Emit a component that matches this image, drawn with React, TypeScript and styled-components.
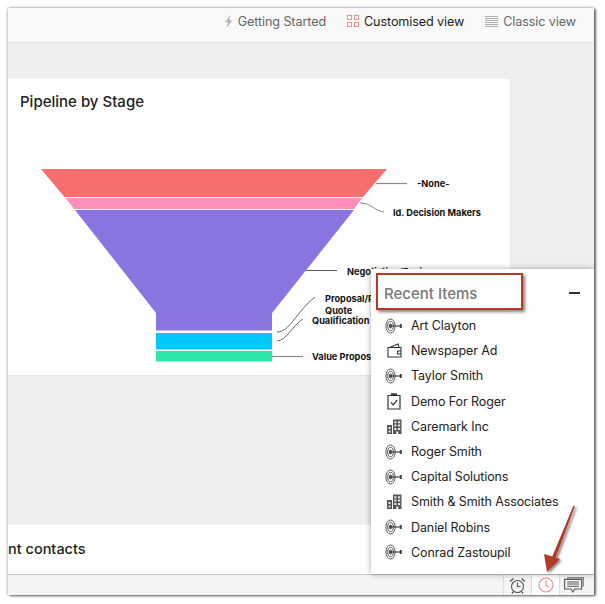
import type { ReactNode } from "react";

import styled, { createGlobalStyle } from "styled-components";

const GlobalStyle = createGlobalStyle`
  html, body {
    margin: 0;
    padding: 0;
    background: #fff;
    font-family: Inter, "Open Sans", sans-serif;
  }
`;

const Page = styled.div`
  width: 605px;
  height: 604px;
  padding: 8px 11px 9px 8px;
  box-sizing: border-box;
  overflow: hidden;
`;

const Window = styled.div`
  position: relative;
  width: 586px;
  height: 587px;
  display: flex;
  flex-direction: column;
  background: #efefef;
  box-shadow: 0 0 3px rgba(0, 0, 0, 0.45), 2px 1px 2px rgba(0, 0, 0, 0.5);
  overflow: hidden;
`;

const Header = styled.header`
  flex: none;
  height: 26px;
  padding: 0 18px 8px 0;
  display: flex;
  align-items: center;
  justify-content: flex-end;
  gap: 21px;
  background: #f9f9f9;
  border-bottom: 1px solid #e4e4e4;
`;

const ViewLink = styled.div<{ $active?: boolean }>`
  display: flex;
  align-items: center;
  gap: 5px;
  font-size: 12.6px;
  letter-spacing: -0.1px;
  color: ${(p) => (p.$active ? "#1c1c1c" : "#666")};
`;

const Main = styled.main`
  flex: 1;
  display: flex;
  flex-direction: column;
  justify-content: space-between;
  padding-top: 36px;
  min-height: 0;
`;

const ChartCard = styled.section`
  width: 502px;
  height: 297px;
  background: #fff;
  border-bottom: 1px solid #e3e3e3;
  box-sizing: border-box;
`;

const CardTitle = styled.h2`
  margin: 0;
  height: 41px;
  padding: 14px 0 0 12px;
  box-sizing: border-box;
  font-size: 15px;
  line-height: 18px;
  font-weight: 500;
  color: #222;
`;

const ContactsCard = styled.section`
  height: 49px;
  display: flex;
  align-items: center;
  background: #fff;
`;

const ContactsTitle = styled.h2`
  margin: 0 0 2px 0;
  font-size: 14.5px;
  font-weight: 500;
  color: #222;
  white-space: nowrap;
`;

const Footer = styled.footer`
  flex: none;
  height: 20px;
  display: flex;
  justify-content: flex-end;
  padding-right: 7px;
  background: #f4f4f4;
  border-top: 1px solid #c9c9c9;
`;

const FooterButton = styled.div<{ $active?: boolean }>`
  width: 27px;
  display: flex;
  align-items: center;
  justify-content: center;
  border-left: 1px solid #dedede;
  background: ${(p) => (p.$active ? "#fff" : "transparent")};
`;

const Popup = styled.aside`
  position: absolute;
  right: 0;
  bottom: 21px;
  width: 223px;
  height: 305px;
  background: #fff;
  box-shadow: 0 0 6px rgba(0, 0, 0, 0.35);
`;

const PopupHeader = styled.div`
  height: 44px;
  padding: 4px 14px 0 13px;
  box-sizing: border-box;
  display: flex;
  align-items: center;
  justify-content: space-between;
`;

const PopupTitle = styled.h3`
  margin: 0;
  font-size: 15px;
  font-weight: 500;
  color: #777;
`;

const Collapse = styled.span`
  width: 11px;
  height: 2px;
  background: #333;
`;

const Highlight = styled.div`
  position: absolute;
  left: 5px;
  top: 4px;
  width: 147px;
  height: 37px;
  box-sizing: border-box;
  border: 2px solid #b23a28;
  box-shadow: 2px 2px 3px rgba(0, 0, 0, 0.5);
`;

const ItemList = styled.ul`
  margin: 0;
  padding: 0;
  list-style: none;
`;

const Item = styled.li`
  height: 25.2px;
  display: flex;
  align-items: center;
  gap: 8px;
  padding-left: 14px;
  font-size: 12.5px;
  letter-spacing: -0.1px;
  color: #222;
`;

const ItemIcon = styled.span`
  width: 18px;
  height: 18px;
  flex: none;
  display: flex;
  align-items: center;
  justify-content: center;
`;

const Arrow = styled.svg`
  position: absolute;
  left: 530px;
  top: 490px;
  overflow: visible;
`;

const chartText = {
  fontSize: 9.2,
  fontWeight: 700,
  fill: "#111",
};

type IconKind = "contact" | "campaign" | "task" | "account";

const items: { label: string; icon: IconKind }[] = [
  { label: "Art Clayton", icon: "contact" },
  { label: "Newspaper Ad", icon: "campaign" },
  { label: "Taylor Smith", icon: "contact" },
  { label: "Demo For Roger", icon: "task" },
  { label: "Caremark Inc", icon: "account" },
  { label: "Roger Smith", icon: "contact" },
  { label: "Capital Solutions", icon: "contact" },
  { label: "Smith & Smith Associates", icon: "account" },
  { label: "Daniel Robins", icon: "contact" },
  { label: "Conrad Zastoupil", icon: "contact" },
];

function BoltIcon(): ReactNode {
  return (
    <svg width="9" height="13" viewBox="0 0 9 13">
      <path d="M6.5 0 L1 7.2 H4 L2.4 13 L8.5 5.6 H5.3 Z" fill="#b5b5b5" />
    </svg>
  );
}

function GridIcon(): ReactNode {
  return (
    <svg width="12" height="12" viewBox="0 0 12 12" fill="none" stroke="#f58e8a">
      <rect x="0.5" y="0.5" width="4" height="4" />
      <rect x="7.5" y="0.5" width="4" height="4" />
      <rect x="0.5" y="7.5" width="4" height="4" />
      <rect x="7.5" y="7.5" width="4" height="4" />
    </svg>
  );
}

function LinesIcon(): ReactNode {
  return (
    <svg width="13" height="11" viewBox="0 0 13 11" stroke="#b0b0b0">
      <path d="M0 0.5H13M0 2.5H13M0 4.5H13M0 6.5H13M0 8.5H13M0 10.5H13" />
    </svg>
  );
}

function ItemGlyph({ kind }: { kind: IconKind }): ReactNode {
  if (kind === "contact") {
    return (
      <svg width="18" height="16" viewBox="0 0 18 16" fill="none" stroke="#444" strokeWidth="0.9">
        <ellipse cx="5.5" cy="8" rx="4.6" ry="7" />
        <ellipse cx="5.5" cy="8" rx="2.8" ry="4.6" />
        <ellipse cx="5.5" cy="8" rx="1.1" ry="2" fill="#444" />
        <path d="M7 8H15" strokeWidth="1.2" />
        <path d="M15.8 6V10" strokeWidth="2" />
      </svg>
    );
  }
  if (kind === "campaign") {
    return (
      <svg width="15" height="15" viewBox="0 0 15 15" fill="none" stroke="#333" strokeWidth="1.1">
        <path d="M1 4.5H14V14H1Z" />
        <path d="M2.5 4.5L11 1L12 4.5" />
        <path d="M14 8H10.5V11H14" />
      </svg>
    );
  }
  if (kind === "task") {
    return (
      <svg width="14" height="17" viewBox="0 0 14 17" fill="none" stroke="#333" strokeWidth="1.2">
        <path d="M1 2.5H13V16H1Z" />
        <path d="M4 1.5H10" strokeWidth="2.4" />
        <path d="M4 9.5L6.3 11.8L10.2 7" />
      </svg>
    );
  }
  return (
    <svg width="15" height="15" viewBox="0 0 15 15" fill="#555">
      <path d="M0 6H5V15H0Z" />
      <path d="M6 0.5H14.5V15H6Z" />
      <path
        fill="#e8e8e8"
        d="M7.3 2.3H9.5V4.3H7.3ZM11 2.3H13.2V4.3H11ZM7.3 5.6H9.5V7.6H7.3ZM11 5.6H13.2V7.6H11ZM7.3 9H9.5V11H7.3ZM11 9H13.2V11H11ZM1.5 8H3.5V10H1.5ZM1.5 11.5H3.5V13.5H1.5Z"
      />
      <path fill="#fff" d="M9.3 12.5H11.2V15H9.3Z" />
    </svg>
  );
}

function FunnelChart(): ReactNode {
  return (
    <svg width="502" height="255" viewBox="8 120 502 255" style={{ display: "block" }}>
      <polygon points="41,169 387,169 363,197 64.5,197" fill="#f66f6d" />
      <polygon points="65.5,198 362,198 354,209 74,209" fill="#fe8fba" />
      <polygon points="75,210 354,210 272,313 272,330.5 156,330.5 156,313" fill="#8a75e0" />
      <rect x="156" y="333" width="116" height="16.5" fill="#00c8fa" />
      <rect x="156" y="351" width="116" height="10.5" fill="#2ce6ae" />
      <g fill="none" stroke="#8a8a8a">
        <path d="M376 183.5H407" strokeWidth="1.2" />
        <path d="M360 203C372 203 374 211 384 212" />
        <path d="M306 270.5H337" stroke="#555" />
        <path d="M277 332C290 332 296 312 315 297" stroke="#666" />
        <path d="M277 341C286 341 292 326 303 319" stroke="#666" />
        <path d="M272 356.5H303" strokeWidth="1.2" />
      </g>
      <text x="417" y="187" {...chartText}>-None-</text>
      <text x="393" y="216" {...chartText}>Id. Decision Makers</text>
      <text x="347" y="275" {...chartText}>Negotiation/Review</text>
      <text x="325" y="302" {...chartText}>Proposal/Price</text>
      <text x="325" y="314" {...chartText}>Quote</text>
      <text x="312" y="324" {...chartText}>Qualification</text>
      <text x="312" y="360" {...chartText}>Value Proposition</text>
    </svg>
  );
}

export default function App(): ReactNode {
  return (
    <Page>
      <GlobalStyle />
      <Window>
        <Header>
          <ViewLink>
            <BoltIcon />
            Getting Started
          </ViewLink>
          <ViewLink $active>
            <GridIcon />
            Customised view
          </ViewLink>
          <ViewLink>
            <LinesIcon />
            Classic view
          </ViewLink>
        </Header>
        <Main>
          <ChartCard>
            <CardTitle>Pipeline by Stage</CardTitle>
            <FunnelChart />
          </ChartCard>
          <ContactsCard>
            <ContactsTitle>nt contacts</ContactsTitle>
          </ContactsCard>
        </Main>
        <Footer>
          <FooterButton>
            <svg width="17" height="17" viewBox="0 0 17 17" fill="none" stroke="#555" strokeWidth="1.1">
              <circle cx="8.5" cy="9.5" r="6" />
              <path d="M8.5 5.5V9.5H11.5" />
              <path d="M1 4.5L4.5 1.5M16 4.5L12.5 1.5M4 15L3 16.5M13 15L14 16.5" strokeWidth="1.4" />
            </svg>
          </FooterButton>
          <FooterButton $active>
            <svg width="16" height="16" viewBox="0 0 16 16" fill="none" stroke="#f08a86" strokeWidth="1.1">
              <circle cx="8" cy="8" r="7" />
              <path d="M8 3.5V8.5L11 10" />
            </svg>
          </FooterButton>
          <FooterButton>
            <svg width="20" height="16" viewBox="0 0 20 16" fill="none" stroke="#555" strokeWidth="1.1">
              <path d="M3 0.6H19.4V9.5" stroke="#888" strokeWidth="1.6" />
              <path d="M0.6 2.4H17.6V12H10.6L8.8 15L7 12H0.6Z" fill="#f4f4f4" />
              <path d="M3.2 5H15M3.2 7H15M3.2 9.2H15" />
            </svg>
          </FooterButton>
        </Footer>
        <Popup>
          <PopupHeader>
            <PopupTitle>Recent Items</PopupTitle>
            <Collapse />
          </PopupHeader>
          <ItemList>
            {items.map((item) => (
              <Item key={item.label}>
                <ItemIcon>
                  <ItemGlyph kind={item.icon} />
                </ItemIcon>
                {item.label}
              </Item>
            ))}
          </ItemList>
          <Highlight />
        </Popup>
        <Arrow width="40" height="80" viewBox="0 0 40 80">
          <defs>
            <filter id="arrowShadow" x="-30%" y="-10%" width="170%" height="130%">
              <feDropShadow dx="2" dy="1.5" stdDeviation="1.2" floodColor="#000" floodOpacity="0.45" />
            </filter>
          </defs>
          <g filter="url(#arrowShadow)" fill="#b23a28">
            <path d="M35.5 7.5L37 8.2L16 64L12.5 62.8Z" />
            <path d="M6 56L22 61L9 74Z" />
          </g>
        </Arrow>
      </Window>
    </Page>
  );
}
